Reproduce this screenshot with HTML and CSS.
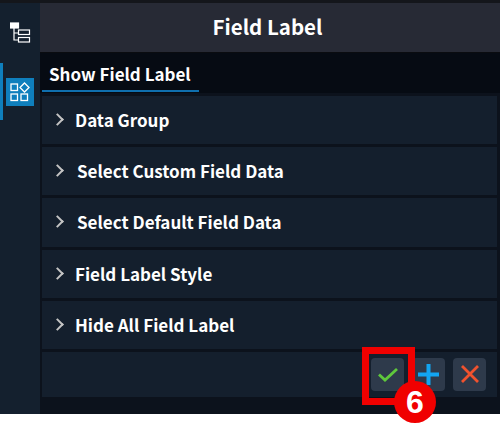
FILE: index.html
```html
<!DOCTYPE html>
<html lang="en">
<head>
    <meta charset="UTF-8">
    <title>Field Label</title>
    <link rel="stylesheet" href="styles.css">
</head>
<body>
    <div class="app">
        <aside class="sidebar">
            <button class="side-btn">
                <svg width="22" height="22" viewBox="0 0 22 22" fill="none" stroke="#fff" stroke-width="1.2">
                    <rect x="0.5" y="1" width="8" height="5" fill="#fff"/>
                    <path d="M4 6V18H8M4 11H8"/>
                    <rect x="8.5" y="8" width="11" height="4.5"/>
                    <rect x="8.5" y="15.5" width="11" height="4.5"/>
                </svg>
            </button>
            <div class="side-active">
                <span class="active-mark"></span>
                <button class="side-btn current">
                    <svg width="20" height="20" viewBox="0 0 20 20" fill="none" stroke="#fff" stroke-width="1.3">
                        <rect x="1" y="2" width="6.5" height="6.5"/>
                        <path d="M14.5 1L19 5.5L14.5 10L10 5.5Z"/>
                        <rect x="1" y="12" width="6.5" height="6.5"/>
                        <rect x="11" y="12" width="6.5" height="6.5"/>
                    </svg>
                </button>
            </div>
        </aside>

        <main class="panel">
            <header class="panel-title">Field Label</header>
            <nav class="tabs">
                <span class="tab">Show Field Label</span>
            </nav>
            <section class="rows">
                <div class="row"><span class="chev"></span>Data Group</div>
                <div class="row"><span class="chev wide"></span>Select Custom Field Data</div>
                <div class="row"><span class="chev wide"></span>Select Default Field Data</div>
                <div class="row"><span class="chev"></span>Field Label Style</div>
                <div class="row"><span class="chev"></span>Hide All Field Label</div>
            </section>
            <div class="actions">
                <button class="act">
                    <svg width="20" height="15" viewBox="0 0 20 15" fill="none" stroke="#5fc83c" stroke-width="2.8"><path d="M1 7.5L7 13L19 2"/></svg>
                </button>
                <button class="act">
                    <svg width="21" height="21" viewBox="0 0 21 21" fill="none" stroke="#12a5f2" stroke-width="4"><path d="M10.5 0V21M0 10.5H21"/></svg>
                </button>
                <button class="act">
                    <svg width="18" height="18" viewBox="0 0 18 18" fill="none" stroke="#f0522e" stroke-width="2.8"><path d="M1 1L17 17M17 1L1 17"/></svg>
                </button>
            </div>
        </main>
    </div>

    <!-- callout over the confirm button -->
    <div class="callout-box"></div>
    <div class="callout-num">6</div>
</body>
</html>
```

FILE: styles.css
```css
/* General Styling */
body {
    margin: 0;
    background: #fff;
    font-family: "Noto Sans CJK SC", "Noto Sans", sans-serif;
    color: #fff;
}

.app {
    display: flex;
    height: 414px;
    width: 500px;
    background: #14202e;
    border-top: 3px solid #14161b;
    box-sizing: border-box;
}

/* Sidebar */
.sidebar {
    width: 40px;
    flex-shrink: 0;
    background: #14202e;
    display: flex;
    flex-direction: column;
}

.side-btn {
    width: 28px;
    height: 28px;
    padding: 0;
    border: none;
    background: none;
    display: flex;
    align-items: center;
    justify-content: center;
}

.sidebar > .side-btn {
    margin: 16px 0 0 7px;
}

.side-active {
    display: flex;
    align-items: center;
    margin-top: 16px;
    height: 57px;
}

.active-mark {
    width: 3px;
    height: 57px;
    background: #0f7fbd;
}

.side-btn.current {
    background: #0f7fbd;
    margin-left: 3px;
}

/* Main panel */
.panel {
    flex: 1;
    background: #0c121c;
    display: flex;
    flex-direction: column;
    min-width: 0;
}

.panel-title {
    height: 50px;
    background: #272a35;
    border-bottom: 1px solid #0a0c10;
    box-sizing: border-box;
    display: flex;
    align-items: center;
    justify-content: center;
    padding: 0 5px 3px 0;
    font-size: 20.5px;
    font-weight: 700;
}

.tabs {
    height: 40px;
    background: #060b13;
    padding-left: 2px;
    display: flex;
}

.tab {
    width: 157px;
    height: 39px;
    box-sizing: border-box;
    padding: 3px 0 0 7px;
    border-bottom: 2px solid #0f6fae;
    display: flex;
    align-items: center;
    font-size: 17px;
    font-weight: 700;
}

.rows {
    padding: 3px 3px 0 2px;
    display: flex;
    flex-direction: column;
    gap: 3px;
}

.row {
    height: 48.2px;
    background: #141f2d;
    display: flex;
    align-items: center;
    padding-left: 11px;
    padding-bottom: 1px;
    box-sizing: border-box;
    font-size: 17px;
    font-weight: 700;
}

.chev {
    width: 7px;
    height: 7px;
    margin-right: 13px;
    border-top: 2px solid #c4c4c4;
    border-right: 2px solid #c4c4c4;
    transform: rotate(45deg);
}

.chev.wide {
    margin-right: 15px;
}

.actions {
    margin: 3px 3px 0 2px;
    height: 45px;
    background: #141f2d;
    display: flex;
    justify-content: flex-end;
    align-items: center;
    gap: 8px;
    padding-right: 11px;
}

.act {
    width: 33px;
    height: 33px;
    padding: 0;
    border: none;
    border-radius: 4px;
    background: #2e3a4b;
    display: flex;
    align-items: center;
    justify-content: center;
}

/* Callout */
.callout-box {
    position: absolute;
    left: 362px;
    top: 347px;
    width: 53px;
    height: 58px;
    box-sizing: border-box;
    border: 7px solid #f00000;
}

.callout-num {
    position: absolute;
    left: 394px;
    top: 381px;
    width: 42px;
    height: 42px;
    border-radius: 50%;
    background: #f00000;
    display: flex;
    align-items: center;
    justify-content: center;
    font-family: "Liberation Sans", sans-serif;
    font-size: 32px;
    font-weight: 700;
}
```
